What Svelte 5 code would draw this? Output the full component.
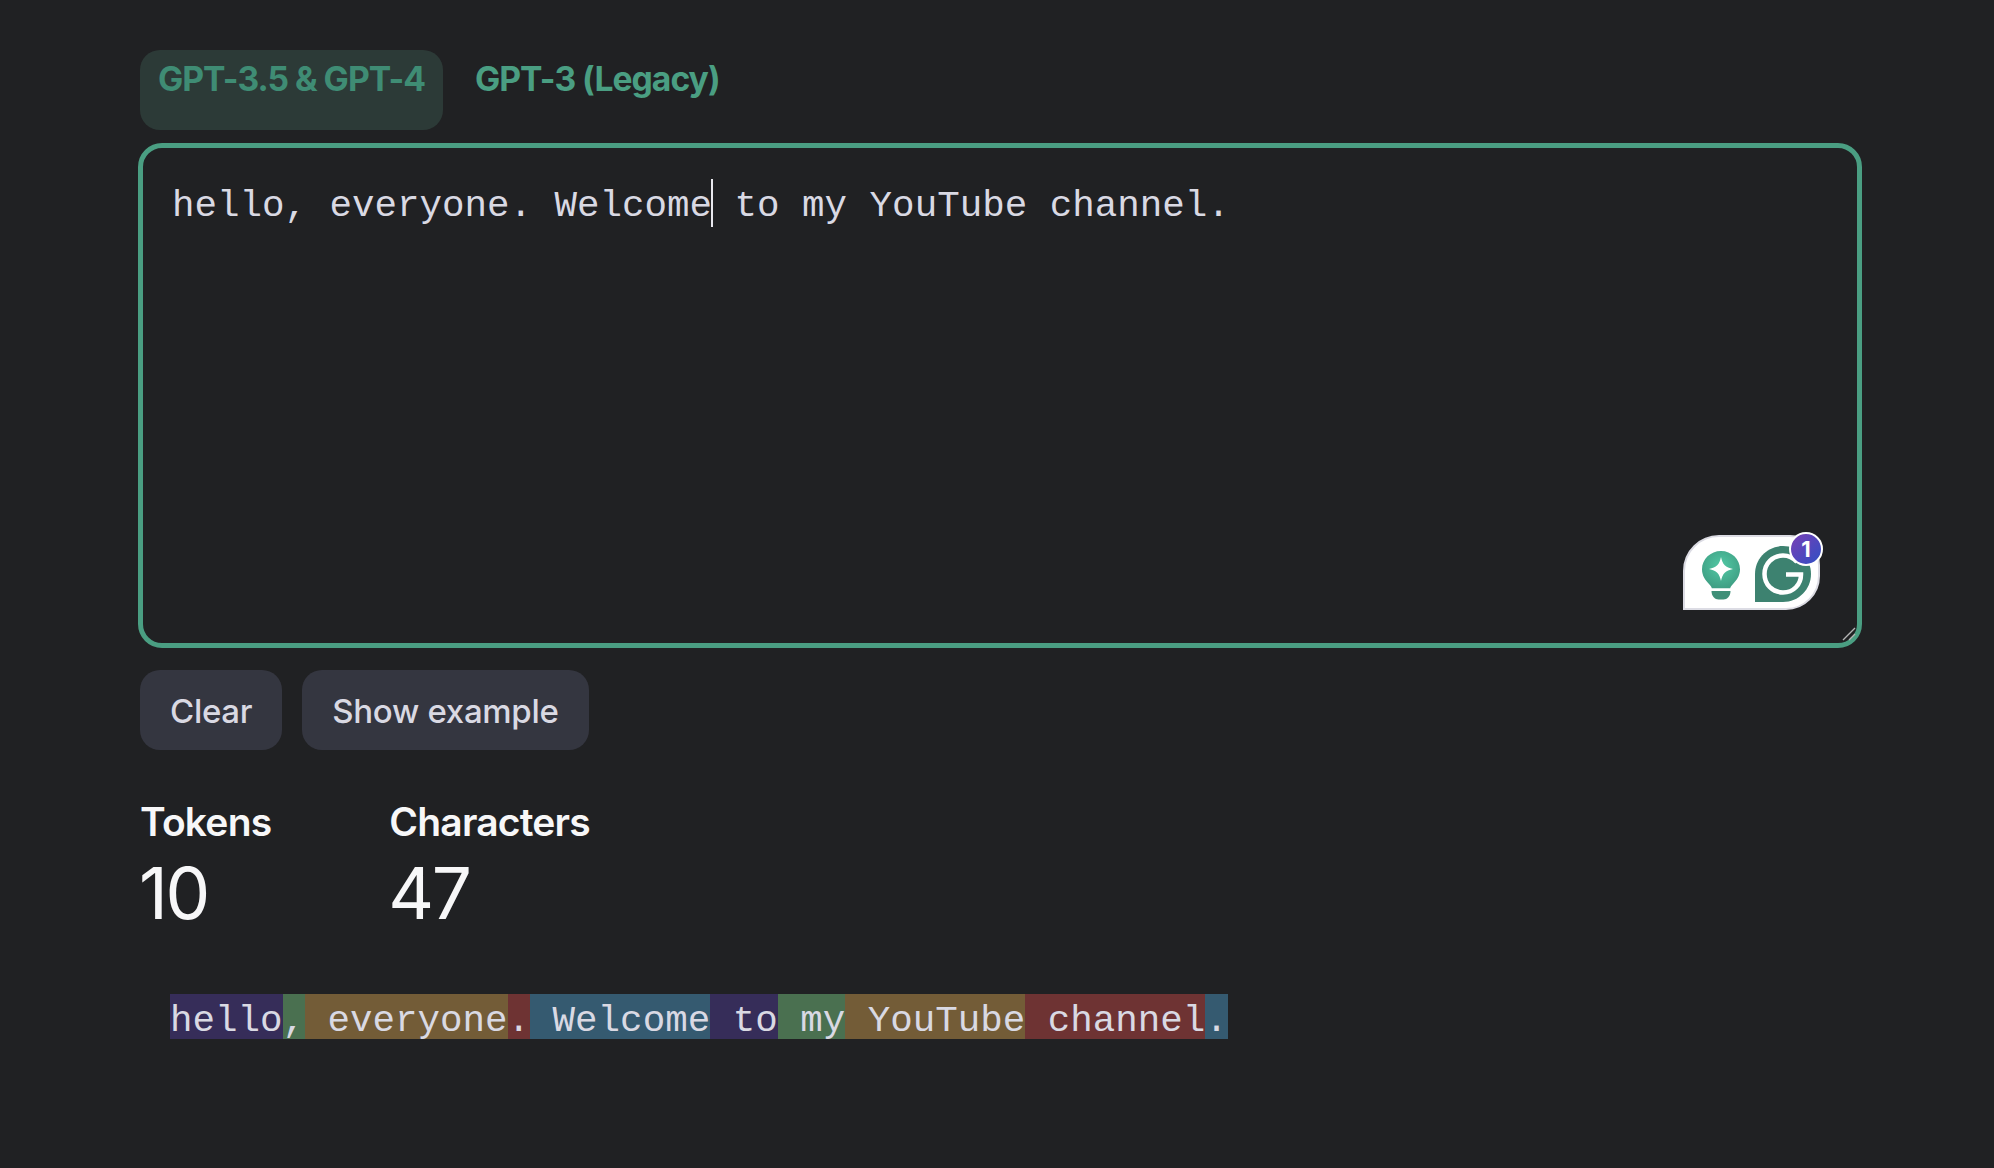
<script>
  const tokens = [
    ['hello', 'purple'], [',', 'green'], [' everyone', 'brown'], ['.', 'red'], [' Welcome', 'blue'],
    [' to', 'purple'], [' my', 'green'], [' YouTube', 'brown'], [' channel', 'red'], ['.', 'blue']
  ];
</script>

<main class="page">
  <nav class="tabs">
    <button class="tab active">GPT-3.5 &amp; GPT-4</button>
    <button class="tab">GPT-3 (Legacy)</button>
  </nav>

  <div class="editor">
    <p class="input">hello, everyone. Welcome<span class="caret"></span> to my YouTube channel.</p>

    <div class="grammarly">
      <svg class="bulb" viewBox="0 0 38 50" width="38" height="50">
        <defs>
          <radialGradient id="bulbfill" cx="50%" cy="40%" r="60%">
            <stop offset="0" stop-color="#52c9a5" />
            <stop offset="1" stop-color="#3f9f84" />
          </radialGradient>
        </defs>
        <path d="M19 0C8.5 0 0 8.2 0 18.3c0 6.6 3.5 11.2 7 14.7 1.6 1.6 2.5 2.8 2.8 4.2h18.4c.3-1.4 1.2-2.6 2.8-4.2 3.5-3.5 7-8.1 7-14.7C38 8.2 29.500 0 19 0z" fill="url(#bulbfill)" />
        <path d="M19 6c1.500 7.500 4.500 10.500 12 12-7.500 1.500-10.500 4.500-12 12-1.500-7.500-4.500-10.500-12-12 7.500-1.500 10.500-4.500 12-12z" fill="#fff" />
        <path d="M9.500 40h19c0 5.500-3.500 8.500-7 8.500h-5c-3.500 0-7-3-7-8.500z" fill="#3f8f78" />
      </svg>
      <svg class="glogo" viewBox="0 0 56 56" width="56" height="56">
        <path d="M0 56V28C0 12.500 12.500 0 28 0s28 12.500 28 28-12.500 28-28 28z" fill="#3d8270" />
        <path d="M31 28.500H46C46 38.500 38.500 46.500 28 46.500 17.500 46.500 9.500 38.500 9.500 28S17.500 9.500 28 9.500c6 0 10.500 2.500 14 6.500" fill="none" stroke="#fff" stroke-width="4.500" />
      </svg>
      <span class="badge">1</span>
    </div>

    <svg class="grip" viewBox="0 0 14 14" width="14" height="14">
      <path d="M1 13 13 1M7 13 13 7" stroke="#b5b5b5" stroke-width="1.400" fill="none" />
    </svg>
  </div>

  <div class="actions">
    <button class="btn">Clear</button>
    <button class="btn">Show example</button>
  </div>

  <section class="stats">
    <div class="stat">
      <h3>Tokens</h3>
      <div class="num">10</div>
    </div>
    <div class="stat">
      <h3>Characters</h3>
      <div class="num">47</div>
    </div>
  </section>

  <pre class="tokens">{#each tokens as t}<span class={t[1]}>{t[0]}</span>{/each}</pre>
</main>

<style>
  :global(body) {
    margin: 0;
    background: #202123;
  }
  .page {
    box-sizing: border-box;
    height: 1168px;
    padding: 50px 132px 0 140px;
    font-family: Inter, "Liberation Sans", sans-serif;
    overflow: hidden;
  }
  .tabs {
    display: flex;
    height: 80px;
  }
  .tab {
    box-sizing: border-box;
    border: 0;
    background: none;
    font: 700 33.700px/1 Inter, sans-serif;
    letter-spacing: -1px;
    color: #4a9e82;
    height: 80px;
    padding: 0 18px 22px;
    border-radius: 20px;
    margin-right: 14px;
  }
  .tab.active {
    background: #2c3a37;
    color: #3f8c74;
  }
  .editor {
    position: relative;
    box-sizing: border-box;
    margin: 13px 0 0 -2px;
    height: 505px;
    border: 5px solid #4a9e82;
    border-radius: 24px;
  }
  .input {
    margin: 0;
    padding: 31px 0 0 29px;
    font: 37.500px/1.200 "Liberation Mono", monospace;
    color: #d9d9e3;
    white-space: pre;
  }
  .caret {
    display: inline-block;
    width: 2px;
    height: 48px;
    margin: 0 -1px;
    background: #e8e8ee;
    vertical-align: -11px;
  }
  .grammarly {
    position: absolute;
    right: 37px;
    bottom: 33px;
    width: 137px;
    height: 75px;
    box-sizing: border-box;
    background: #fff;
    border: 2px solid #dcdce4;
    border-radius: 36px 30px 34px 0;
  }
  .bulb {
    position: absolute;
    left: 17px;
    top: 14px;
  }
  .glogo {
    position: absolute;
    left: 70px;
    top: 9px;
  }
  .badge {
    position: absolute;
    right: -5px;
    top: -5px;
    width: 30px;
    height: 30px;
    border: 2px solid #fff;
    border-radius: 50%;
    background: linear-gradient(135deg, #7a3fb5, #2f4fc4);
    color: #fff;
    font: 700 22px/30px Inter, sans-serif;
    text-align: center;
  }
  .grip {
    position: absolute;
    right: 1px;
    bottom: 2px;
  }
  .actions {
    display: flex;
    gap: 20px;
    margin-top: 22px;
  }
  .btn {
    height: 80px;
    padding: 2px 30px 0;
    border: 0;
    border-radius: 20px;
    background: #343640;
    color: #d9d9e3;
    font: 500 33px/1 Inter, sans-serif;
    letter-spacing: -0.300px;
  }
  .stats {
    display: flex;
    gap: 118px;
    margin-top: 49px;
  }
  h3 {
    margin: 0;
    font: 600 39px/1.200 Inter, sans-serif;
    letter-spacing: -0.800px;
    color: #f7f7f8;
  }
  .num {
    margin: 5px 0 0 -1px;
    font: 400 71px/1.200 Inter, sans-serif;
    letter-spacing: -2.500px;
    color: #f7f7f8;
  }
  .tokens {
    margin: 58px 0 0 30px;
    font: 37.500px/55px "Liberation Mono", monospace;
    color: #d9d9e3;
  }
  .tokens span {
    display: inline-block;
    height: 45px;
  }
  .purple { background: #362d59; }
  .green { background: #4a7050; }
  .brown { background: #735c37; }
  .red { background: #6e3333; }
  .blue { background: #355a70; }
</style>
